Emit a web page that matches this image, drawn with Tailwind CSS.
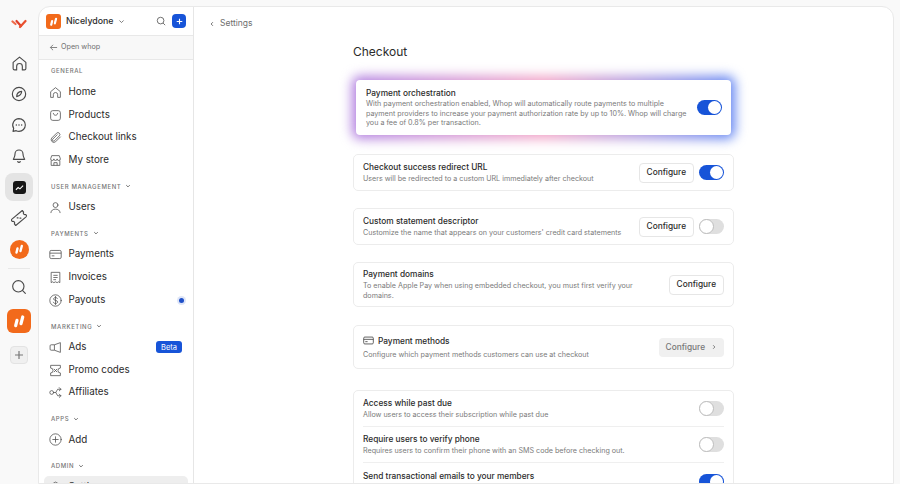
<!DOCTYPE html>
<html lang="en">
<head>
    <meta charset="UTF-8">
    <title>Checkout settings</title>
    <script src="https://cdn.jsdelivr.net/npm/@tailwindcss/browser@4"></script>
</head>
<body class="bg-[#f9f9f9] h-[484px] w-[900px] overflow-hidden font-['Inter',sans-serif] text-[#2b2b2b]">
<div class="flex h-[484px]">
    <!-- app rail -->
    <div class="w-[38px] shrink-0 flex flex-col items-center text-[#4a4a4a]">
        <svg class="mt-[19px] w-[16px] h-[10px]" viewBox="0 0 16 10" fill="none" stroke-width="2.200" stroke-linecap="round"><path d="M1.500 2.500 4.500 5" stroke="#ee6a4a"/><path d="M5.500 2 10 7" stroke="#e0402a"/><path d="M9 8 14.500 2" stroke="#e9502f"/></svg>
        <svg class="mt-[25.500px] w-[17px] h-[17px]" viewBox="0 0 24 24" fill="none" stroke="currentColor" stroke-width="1.600" stroke-linejoin="round"><path d="M3 10.500 12 3l9 7.500V19a2 2 0 0 1-2 2h-3v-5a4 4 0 0 0-8 0v5H5a2 2 0 0 1-2-2Z"/></svg>
        <svg class="mt-[14.500px] w-[16px] h-[16px]" viewBox="0 0 24 24" fill="none" stroke="currentColor" stroke-width="1.700" stroke-linejoin="round"><circle cx="12" cy="12" r="10"/><path d="M16 8c0 4-3 7-7.500 8C8.500 11.500 11 8.500 16 8Z"/></svg>
        <svg class="mt-[15px] w-[16px] h-[16px]" viewBox="0 0 24 24" fill="none" stroke="currentColor" stroke-width="1.700" stroke-linejoin="round"><path d="M12 2.500a9.500 9.500 0 0 1 0 19c-1.500 0-3-.4-4.200-1L3 21.500l1-4.500A9.500 9.500 0 0 1 12 2.500Z"/><path d="M8 12h.01M12 12h.01M16 12h.01" stroke-linecap="round" stroke-width="2.200"/></svg>
        <svg class="mt-[15px] w-[16px] h-[16px]" viewBox="0 0 24 24" fill="none" stroke="currentColor" stroke-width="1.700" stroke-linejoin="round"><path d="M6 9a6 6 0 0 1 12 0c0 5 2 6.500 2.500 8h-17C4 15.500 6 14 6 9Z"/><path d="M10 20.500a2.500 2.500 0 0 0 4 0" stroke-linecap="round"/></svg>
        <div class="mt-[9px] w-[28px] h-[28px] rounded-lg bg-[#e4e4e4] flex items-center justify-center">
            <div class="w-[13px] h-[13px] rounded-[3px] bg-[#161616] flex items-center justify-center">
                <svg class="w-[9px] h-[9px]" viewBox="0 0 10 10" fill="none" stroke="#fff" stroke-width="1.200"><path d="M1 7.500 3.500 5l2 1.500L9 3"/></svg>
            </div>
        </div>
        <svg class="mt-[9px] w-[16px] h-[16px]" viewBox="0 0 24 24" fill="none" stroke="currentColor" stroke-width="1.700" stroke-linejoin="round"><g transform="rotate(-40 12 12)"><path d="M1 6.500h22v3.200a2.400 2.400 0 0 0 0 4.600v3.200H1v-3.200a2.400 2.400 0 0 0 0-4.600Z"/><path d="M10 10l1 1M13 13l1 1" stroke-linecap="round"/></g></svg>
        <div class="mt-[13.500px] w-[19px] h-[19px] rounded-full bg-[#f26a1b] flex items-center justify-center">
            <svg class="w-[12px] h-[12px]" viewBox="0 0 12 12" fill="none" stroke="#fff" stroke-width="2.400" stroke-linecap="round"><path d="M3.500 9.500 4.500 5.500M7.500 8 8.800 3"/></svg>
        </div>
        <div class="mt-[9.500px] w-[22px] h-px bg-[#e8e8e8]"></div>
        <svg class="mt-[10px] w-[16px] h-[16px]" viewBox="0 0 24 24" fill="none" stroke="currentColor" stroke-width="1.700" stroke-linecap="round"><circle cx="11" cy="11" r="8.500"/><path d="m17.500 17.500 4 4"/></svg>
        <div class="mt-[14px] w-[24px] h-[24px] rounded-[6px] bg-[#f26a1b] flex items-center justify-center">
            <svg class="w-[16px] h-[16px]" viewBox="0 0 12 12" fill="none" stroke="#fff" stroke-width="2.400" stroke-linecap="round"><path d="M3.500 9.500 4.500 5.500M7.500 8 8.800 3"/></svg>
        </div>
        <div class="mt-[13px] w-[18px] h-[18px] rounded-[4px] bg-[#f0f0f0] border border-[#e3e3e3] flex items-center justify-center">
            <svg class="w-[10px] h-[10px]" viewBox="0 0 10 10" stroke="#777" stroke-width="1.200"><path d="M5 1v8M1 5h8"/></svg>
        </div>
    </div>

    <!-- panel -->
    <div class="mt-[6px] mr-[6px] flex-1 flex bg-white border border-[#e9e9e9] rounded-tl-xl rounded-tr-xl overflow-hidden">
        <!-- sidebar -->
        <div class="w-[155px] shrink-0 border-r border-[#e6e6e6] flex flex-col">
            <div class="h-[29px] shrink-0 flex items-center pl-[7px] pr-[7px] border-b border-[#e8e8e8]">
                <div class="w-[15px] h-[15px] rounded-[3px] bg-[#f26a1b] flex items-center justify-center">
                    <svg class="w-[11px] h-[11px]" viewBox="0 0 12 12" fill="none" stroke="#fff" stroke-width="2.400" stroke-linecap="round"><path d="M3.500 9.500 4.500 5.500M7.500 8 8.800 3"/></svg>
                </div>
                <span class="ml-[5px] text-[8.800px] font-medium">Nicelydone</span>
                <svg class="ml-[4px] w-[7px] h-[7px]" viewBox="0 0 10 10" fill="none" stroke="#666" stroke-width="1.200"><path d="m2 3.500 3 3 3-3"/></svg>
                <svg class="ml-auto w-[10px] h-[10px]" viewBox="0 0 24 24" fill="none" stroke="#555" stroke-width="2"><circle cx="11" cy="11" r="8"/><path d="m17 17 5 5"/></svg>
                <div class="ml-[6px] w-[14px] h-[14px] rounded-[4px] bg-[#1754d8] flex items-center justify-center">
                    <svg class="w-[7px] h-[7px]" viewBox="0 0 10 10" stroke="#fff" stroke-width="1.600"><path d="M5 1v8M1 5h8"/></svg>
                </div>
            </div>
            <div class="h-[24px] shrink-0 flex items-center pl-[10px] bg-[#f8f8f8] border-b border-[#e8e8e8] text-[#6f6f6f]">
                <svg class="w-[9px] h-[9px]" viewBox="0 0 10 10" fill="none" stroke="#777" stroke-width="1"><path d="M9 5H1.500M4.500 2 1.500 5l3 3"/></svg>
                <span class="ml-[3px] text-[7.200px]">Open whop</span>
            </div>

            <div class="pl-[12px] pt-[6px] h-[18px] flex items-center text-[6px] font-medium tracking-[0.1em] text-[#777]">GENERAL</div>
            <div class="flex flex-col mt-[6px]">
                <div class="h-[22.700px] flex items-center pl-[10px]">
                    <svg class="w-[13px] h-[13px] text-[#555]" viewBox="0 0 24 24" fill="none" stroke="currentColor" stroke-width="1.500" stroke-linejoin="round"><path d="M3 10.500 12 3l9 7.500V21h-5v-5a4 4 0 0 0-8 0v5H3Z"/></svg>
                    <span class="ml-[6.500px] text-[9.800px]">Home</span>
                </div>
                <div class="h-[22.700px] flex items-center pl-[10px]">
                    <svg class="w-[13px] h-[13px] text-[#555]" viewBox="0 0 24 24" fill="none" stroke="currentColor" stroke-width="1.500" stroke-linejoin="round"><rect x="3" y="3" width="18" height="18" rx="4"/><path d="M8 8c0 5 8 5 8 0" stroke-linecap="round"/></svg>
                    <span class="ml-[6.500px] text-[9.800px]">Products</span>
                </div>
                <div class="h-[22.700px] flex items-center pl-[10px]">
                    <svg class="w-[13px] h-[13px] text-[#555]" viewBox="0 0 24 24" fill="none" stroke="currentColor" stroke-width="1.500" stroke-linecap="round" stroke-linejoin="round"><path d="m21 11-9 9a5 5 0 0 1-7-7l9-9a3.500 3.500 0 0 1 5 5l-9 9a2 2 0 0 1-3-3l8-8"/></svg>
                    <span class="ml-[6.500px] text-[9.800px]">Checkout links</span>
                </div>
                <div class="h-[22.700px] flex items-center pl-[10px]">
                    <svg class="w-[13px] h-[13px] text-[#555]" viewBox="0 0 24 24" fill="none" stroke="currentColor" stroke-width="1.500" stroke-linejoin="round"><path d="M5 3h14l2 6a3 3 0 0 1-6 0 3 3 0 0 1-6 0 3 3 0 0 1-6 0ZM4 12v9h16v-9M9 21v-5h6v5"/></svg>
                    <span class="ml-[6.500px] text-[9.800px]">My store</span>
                </div>
            </div>

            <div class="pl-[12px] mt-[8.500px] h-[12px] shrink-0 flex items-center gap-[4px] text-[6px] font-medium tracking-[0.1em] text-[#777]">USER MANAGEMENT
                <svg class="w-[6px] h-[6px]" viewBox="0 0 10 10" fill="none" stroke="#666" stroke-width="1.500"><path d="m2 3.500 3 3 3-3"/></svg>
            </div>
            <div class="flex flex-col mt-[4px]">
                <div class="h-[22.700px] flex items-center pl-[10px]">
                    <svg class="w-[13px] h-[13px] text-[#555]" viewBox="0 0 24 24" fill="none" stroke="currentColor" stroke-width="1.500" stroke-linecap="round"><circle cx="12" cy="7.500" r="4.500"/><path d="M3.500 21.500c.5-4.500 4-6.500 8.500-6.500s8 2 8.500 6.500"/></svg>
                    <span class="ml-[6.500px] text-[9.800px]">Users</span>
                </div>
            </div>

            <div class="pl-[12px] mt-[8.500px] h-[12px] shrink-0 flex items-center gap-[4px] text-[6px] font-medium tracking-[0.1em] text-[#777]">PAYMENTS
                <svg class="w-[6px] h-[6px]" viewBox="0 0 10 10" fill="none" stroke="#666" stroke-width="1.500"><path d="m2 3.500 3 3 3-3"/></svg>
            </div>
            <div class="flex flex-col mt-[4px]">
                <div class="h-[22.700px] flex items-center pl-[10px]">
                    <svg class="w-[13px] h-[13px] text-[#555]" viewBox="0 0 24 24" fill="none" stroke="currentColor" stroke-width="1.500"><rect x="1.500" y="4.500" width="21" height="15" rx="2.500"/><path d="M1.500 9.500h21M5 14.500h5"/></svg>
                    <span class="ml-[6.500px] text-[9.800px]">Payments</span>
                </div>
                <div class="h-[22.700px] flex items-center pl-[10px]">
                    <svg class="w-[13px] h-[13px] text-[#555]" viewBox="0 0 24 24" fill="none" stroke="currentColor" stroke-width="1.500" stroke-linejoin="round"><path d="M4 2.500h16v19l-2.500-1.500-2.500 1.500-3-1.500-3 1.500L6.500 20 4 21.500ZM8 8h8M8 12h8M8 16h5"/></svg>
                    <span class="ml-[6.500px] text-[9.800px]">Invoices</span>
                </div>
                <div class="h-[22.700px] flex items-center pl-[10px] pr-[9px]">
                    <svg class="w-[13px] h-[13px] text-[#555]" viewBox="0 0 24 24" fill="none" stroke="currentColor" stroke-width="1.500" stroke-linecap="round"><circle cx="12" cy="12" r="10.500"/><path d="M15.500 8.500C15 7 13.500 6.500 12 6.500c-2 0-3.500 1-3.500 2.700 0 3.600 7.500 1.800 7.500 5.500 0 1.800-1.800 2.800-4 2.800-1.800 0-3.500-.8-4-2.300M12 4.500v15"/></svg>
                    <span class="ml-[6.500px] text-[9.800px]">Payouts</span>
                    <span class="ml-auto w-[5px] h-[5px] rounded-full bg-[#1f50c8] ring-2 ring-[#1f50c8]/15"></span>
                </div>
            </div>

            <div class="pl-[12px] mt-[8.500px] h-[12px] shrink-0 flex items-center gap-[4px] text-[6px] font-medium tracking-[0.1em] text-[#777]">MARKETING
                <svg class="w-[6px] h-[6px]" viewBox="0 0 10 10" fill="none" stroke="#666" stroke-width="1.500"><path d="m2 3.500 3 3 3-3"/></svg>
            </div>
            <div class="flex flex-col mt-[4px]">
                <div class="h-[22.700px] flex items-center pl-[10px] pr-[11px]">
                    <svg class="w-[13px] h-[13px] text-[#555]" viewBox="0 0 24 24" fill="none" stroke="currentColor" stroke-width="1.500" stroke-linejoin="round"><path d="M21 3v18l-11-4H4a2 2 0 0 1-2-2V9a2 2 0 0 1 2-2h6ZM10 7v10"/></svg>
                    <span class="ml-[6.500px] text-[9.800px]">Ads</span>
                    <span class="ml-auto h-[12px] px-[5px] rounded-[3px] bg-[#1754d8] text-white text-[7.500px] flex items-center">Beta</span>
                </div>
                <div class="h-[22.700px] flex items-center pl-[10px]">
                    <svg class="w-[13px] h-[13px] text-[#555]" viewBox="0 0 24 24" fill="none" stroke="currentColor" stroke-width="1.500" stroke-linejoin="round"><path d="M3 2.500h18v5a4.500 4.500 0 0 0 0 9v5H3v-5a4.500 4.500 0 0 0 0-9ZM9 9l6 6M15 9l-6 6"/></svg>
                    <span class="ml-[6.500px] text-[9.800px]">Promo codes</span>
                </div>
                <div class="h-[22.700px] flex items-center pl-[10px]">
                    <svg class="w-[13px] h-[13px] text-[#555]" viewBox="0 0 24 24" fill="none" stroke="currentColor" stroke-width="1.500" stroke-linecap="round"><circle cx="5" cy="12" r="3.500"/><path d="M8.500 12h4l3.500-6h6M12.500 12l3.500 6h6M19 3l3 3-3 3M19 15l3 3-3 3"/></svg>
                    <span class="ml-[6.500px] text-[9.800px]">Affiliates</span>
                </div>
            </div>

            <div class="pl-[12px] mt-[8.500px] h-[12px] shrink-0 flex items-center gap-[4px] text-[6px] font-medium tracking-[0.1em] text-[#777]">APPS
                <svg class="w-[6px] h-[6px]" viewBox="0 0 10 10" fill="none" stroke="#666" stroke-width="1.500"><path d="m2 3.500 3 3 3-3"/></svg>
            </div>
            <div class="flex flex-col mt-[4px]">
                <div class="h-[22.700px] flex items-center pl-[10px]">
                    <svg class="w-[13px] h-[13px] text-[#555]" viewBox="0 0 24 24" fill="none" stroke="currentColor" stroke-width="1.500" stroke-linecap="round"><circle cx="12" cy="12" r="10.500"/><path d="M12 7v10M7 12h10"/></svg>
                    <span class="ml-[6.500px] text-[9.800px]">Add</span>
                </div>
            </div>

            <div class="pl-[12px] mt-[8.500px] h-[12px] shrink-0 flex items-center gap-[4px] text-[6px] font-medium tracking-[0.1em] text-[#777]">ADMIN
                <svg class="w-[6px] h-[6px]" viewBox="0 0 10 10" fill="none" stroke="#666" stroke-width="1.500"><path d="m2 3.500 3 3 3-3"/></svg>
            </div>
            <div class="mx-[5px] mt-[4px] h-[22.700px] shrink-0 flex items-center pl-[5px] rounded-[5px] bg-[#eeeeee]">
                <svg class="w-[13px] h-[13px] text-[#555]" viewBox="0 0 24 24" fill="none" stroke="currentColor" stroke-width="1.500" stroke-linejoin="round"><path d="m12 2 9 5v10l-9 5-9-5V7Z"/><circle cx="12" cy="12" r="3.500"/></svg>
                <span class="ml-[6.500px] text-[9.800px]">Settings</span>
            </div>
        </div>

        <!-- main -->
        <div class="flex-1 min-w-0 flex flex-col overflow-hidden">
            <div class="h-[33px] shrink-0 flex items-center pl-[15px] text-[#6f6f6f]">
                <svg class="w-[6px] h-[6px]" viewBox="0 0 10 10" fill="none" stroke="#666" stroke-width="1.500"><path d="M6.500 2 3.500 5l3 3"/></svg>
                <span class="ml-[5px] text-[8.500px]">Settings</span>
            </div>
            <div class="ml-[159px] w-[381px] flex flex-col shrink-0">
                <h1 class="text-[12px] leading-[20px] mt-[2px]">Checkout</h1>

                <div class="relative mx-[3px] mt-[18px] h-[55px]">
                    <div class="absolute -inset-[4px] rounded-[8px] blur-[6px] bg-gradient-to-r from-[#b07fe0] via-[#f2a3c6] to-[#5f84f2]"></div>
                    <div class="relative h-full rounded-[4px] bg-white flex items-center pl-[10px] pr-[9px]">
                        <div class="flex-1 min-w-0 pr-[6px]">
                            <div class="text-[8.300px] leading-[11px] font-medium">Payment orchestration</div>
                            <div class="text-[7.150px] leading-[9.500px] text-[#7a7a7a] mt-[0.500px]">With payment orchestration enabled, Whop will automatically route payments to multiple payment providers to increase your payment authorization rate by up to 10%. Whop will charge you a fee of 0.8% per transaction.</div>
                        </div>
                        <div class="w-[25px] h-[15px] rounded-full bg-[#1754d8] flex items-center justify-end shrink-0"><span class="w-[13px] h-[13px] mr-px rounded-full bg-white"></span></div>
                    </div>
                </div>

                <div class="mt-[19px] h-[37px] rounded-[5px] border border-[#ececec] flex items-center pl-[9px] pr-[9px]">
                    <div class="flex-1 min-w-0">
                        <div class="text-[8.300px] leading-[12px] font-medium">Checkout success redirect URL</div>
                        <div class="text-[7.150px] leading-[10px] text-[#7a7a7a] mt-px">Users will be redirected to a custom URL immediately after checkout</div>
                    </div>
                    <div class="h-[20px] px-[7px] rounded-[4px] border border-[#e6e6e6] text-[8.300px] font-medium flex items-center">Configure</div>
                    <div class="ml-[5px] w-[25px] h-[15px] rounded-full bg-[#1754d8] flex items-center justify-end shrink-0"><span class="w-[13px] h-[13px] mr-px rounded-full bg-white"></span></div>
                </div>

                <div class="mt-[17px] h-[37px] rounded-[5px] border border-[#ececec] flex items-center pl-[9px] pr-[9px]">
                    <div class="flex-1 min-w-0">
                        <div class="text-[8.300px] leading-[12px] font-medium">Custom statement descriptor</div>
                        <div class="text-[7.150px] leading-[10px] text-[#7a7a7a] mt-px">Customize the name that appears on your customers' credit card statements</div>
                    </div>
                    <div class="h-[20px] px-[7px] rounded-[4px] border border-[#e6e6e6] text-[8.300px] font-medium flex items-center">Configure</div>
                    <div class="ml-[5px] w-[25px] h-[15px] rounded-full bg-[#dfdfdf] flex items-center shrink-0"><span class="w-[15px] h-[15px] rounded-full bg-white border border-[#bdbdbd]"></span></div>
                </div>

                <div class="mt-[17px] h-[45px] rounded-[5px] border border-[#ececec] flex items-center pl-[9px] pr-[9px]">
                    <div class="flex-1 min-w-0 pr-[20px]">
                        <div class="text-[8.300px] leading-[12px] font-medium">Payment domains</div>
                        <div class="text-[7.150px] leading-[10px] text-[#7a7a7a] mt-px">To enable Apple Pay when using embedded checkout, you must first verify your domains.</div>
                    </div>
                    <div class="h-[20px] px-[7px] rounded-[4px] border border-[#e6e6e6] text-[8.300px] font-medium flex items-center">Configure</div>
                </div>

                <div class="mt-[18px] h-[44px] rounded-[5px] border border-[#ececec] flex items-center pl-[9px] pr-[9px]">
                    <div class="flex-1 min-w-0">
                        <div class="flex items-center gap-[4px]">
                            <svg class="w-[11px] h-[11px] text-[#444]" viewBox="0 0 24 24" fill="none" stroke="currentColor" stroke-width="1.800"><rect x="1.500" y="4.500" width="21" height="15" rx="2.500"/><path d="M1.500 9.500h21M5 14.500h5"/></svg>
                            <span class="text-[8.300px] leading-[12px] font-medium">Payment methods</span>
                        </div>
                        <div class="text-[7.150px] leading-[10px] text-[#7a7a7a] mt-[3px]">Configure which payment methods customers can use at checkout</div>
                    </div>
                    <div class="h-[19px] px-[7px] rounded-[4px] bg-[#f0f0f0] text-[#777] text-[8.300px] font-medium flex items-center gap-[6px]">Configure
                        <svg class="w-[6px] h-[6px]" viewBox="0 0 10 10" fill="none" stroke="#777" stroke-width="1.500"><path d="M3.500 2 6.500 5l-3 3"/></svg>
                    </div>
                </div>

                <div class="mt-[21px] rounded-[5px] border border-[#ececec] flex flex-col px-[9px]">
                    <div class="h-[36px] flex items-center border-b border-[#efefef]">
                        <div class="flex-1 min-w-0">
                            <div class="text-[8.300px] leading-[12px] font-medium">Access while past due</div>
                            <div class="text-[7.150px] leading-[10px] text-[#7a7a7a] mt-px">Allow users to access their subscription while past due</div>
                        </div>
                        <div class="w-[25px] h-[15px] rounded-full bg-[#dfdfdf] flex items-center shrink-0"><span class="w-[15px] h-[15px] rounded-full bg-white border border-[#bdbdbd]"></span></div>
                    </div>
                    <div class="h-[36px] flex items-center border-b border-[#efefef]">
                        <div class="flex-1 min-w-0">
                            <div class="text-[8.300px] leading-[12px] font-medium">Require users to verify phone</div>
                            <div class="text-[7.150px] leading-[10px] text-[#7a7a7a] mt-px">Requires users to confirm their phone with an SMS code before checking out.</div>
                        </div>
                        <div class="w-[25px] h-[15px] rounded-full bg-[#dfdfdf] flex items-center shrink-0"><span class="w-[15px] h-[15px] rounded-full bg-white border border-[#bdbdbd]"></span></div>
                    </div>
                    <div class="h-[36px] flex items-center">
                        <div class="flex-1 min-w-0 pb-[11px]">
                            <div class="text-[8.300px] leading-[12px] font-medium">Send transactional emails to your members</div>
                        </div>
                        <div class="w-[25px] h-[15px] rounded-full bg-[#1754d8] flex items-center justify-end shrink-0"><span class="w-[13px] h-[13px] mr-px rounded-full bg-white"></span></div>
                    </div>
                </div>
            </div>
        </div>
    </div>
</div>
</body>
</html>
